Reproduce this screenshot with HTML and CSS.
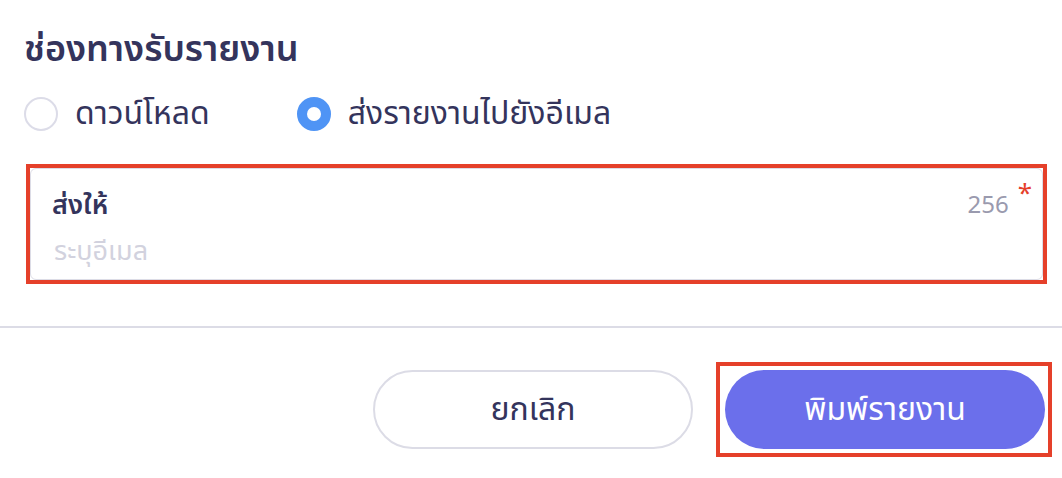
FILE: index.html
```html
<html>
  <head>
    <meta charset="utf-8">
    <link rel="stylesheet" href="styles.css">
  </head>
  <body>
    <section class="report-channel">
      <h2 class="section-title">ช่องทางรับรายงาน</h2>
      <div class="radio-group">
        <label class="radio-option">
          <span class="radio"></span>
          <span class="radio-label">ดาวน์โหลด</span>
        </label>
        <label class="radio-option">
          <span class="radio checked"></span>
          <span class="radio-label">ส่งรายงานไปยังอีเมล</span>
        </label>
      </div>
      <div class="highlight">
        <div class="field">
          <div class="field-head">
            <span class="field-label">ส่งให้</span>
            <span class="field-count">256</span>
            <span class="required">*</span>
          </div>
          <div class="field-input">ระบุอีเมล</div>
        </div>
      </div>
    </section>
    <div class="divider"></div>
    <footer class="actions">
      <button class="btn btn-outline">ยกเลิก</button>
      <div class="highlight highlight-btn">
        <button class="btn btn-primary">พิมพ์รายงาน</button>
      </div>
    </footer>
  </body>
</html>
```

FILE: styles.css
```css
body {
  margin: 0;
  background: #fff;
  font-family: "Noto Sans Thai", "Noto Sans", "DejaVu Sans", sans-serif;
  color: #34345c;
}
.report-channel {
  padding: 26px 15px 0 24px;
}
.section-title {
  margin: 0;
  font-size: 36px;
  font-weight: 600;
  line-height: 48px;
}
.radio-group {
  display: flex;
  gap: 87px;
  margin-top: 18px;
}
.radio-option {
  display: flex;
  align-items: center;
  gap: 17px;
}
.radio {
  width: 34px;
  height: 34px;
  border: 2px solid #dcdce8;
  border-radius: 50%;
  box-sizing: border-box;
  position: relative;
}
.radio.checked {
  background: #4f94f5;
  border-color: #4f94f5;
}
.radio.checked::after {
  content: "";
  position: absolute;
  top: 50%;
  left: 50%;
  width: 14px;
  height: 14px;
  border-radius: 50%;
  background: #fff;
  transform: translate(-50%, -50%);
}
.radio-label {
  font-size: 32px;
  line-height: 44px;
}
.highlight {
  border: 4px solid #e5402a;
}
.report-channel .highlight {
  margin: 28px 0 0 2px;
}
.field {
  border: 1px solid #dcdce6;
  border-radius: 6px;
  padding: 19px 10px 10px 21px;
}
.field-head {
  display: flex;
  align-items: flex-start;
}
.field-label {
  font-size: 27px;
  font-weight: 600;
  line-height: 36px;
  flex: 1;
}
.field-count {
  font-size: 24px;
  color: #9a9aae;
  line-height: 36px;
}
.required {
  color: #e5402a;
  font-size: 26px;
  line-height: 20px;
  margin-top: -4px;
  margin-left: 9px;
}
.field-input {
  font-size: 27px;
  color: #d2d2de;
  line-height: 34px;
  margin-top: 11px;
  padding-left: 2px;
}
.divider {
  height: 2px;
  background: #dcdce6;
  margin-top: 42px;
}
.actions {
  display: flex;
  justify-content: flex-end;
  align-items: center;
  gap: 23px;
  padding: 34px 10px 0 0;
}
.btn {
  width: 320px;
  height: 79px;
  border-radius: 40px;
  font-family: inherit;
  font-size: 32px;
  cursor: pointer;
}
.btn-outline {
  background: #fff;
  border: 2px solid #dcdce6;
  color: #34345c;
}
.highlight-btn {
  padding: 4px 3px 4px 5px;
}
.btn-primary {
  display: block;
  background: #6b6feb;
  border: none;
  color: #fff;
}
```
